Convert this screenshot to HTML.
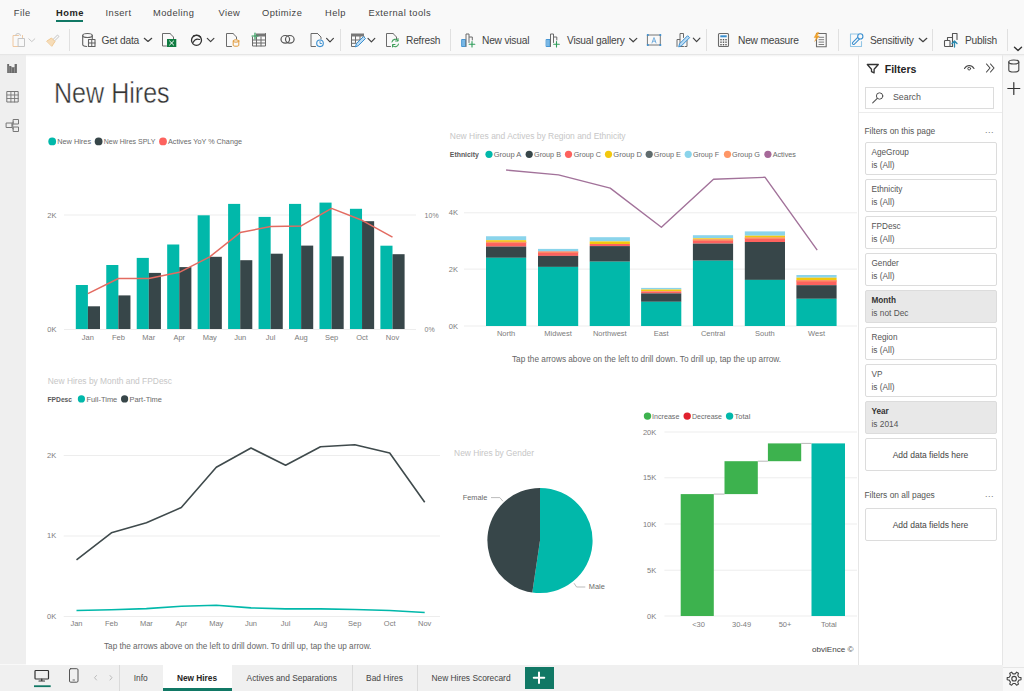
<!DOCTYPE html>
<html><head><meta charset="utf-8">
<style>
*{margin:0;padding:0;box-sizing:border-box}
html,body{width:1024px;height:691px;overflow:hidden;background:#f9f9f9;font-family:"Liberation Sans",sans-serif;color:#323130}
.a{position:absolute}
.t{position:absolute;white-space:nowrap;line-height:1}
#menu .t{font-size:9.3px;letter-spacing:0.45px;color:#444;top:8.8px}
#rib .t{font-size:10.2px;letter-spacing:-0.2px;color:#444;top:36.3px}
.sep{position:absolute;width:1px;background:#e0e0e0;top:29px;height:22px}
#rail{left:0;top:55px;width:26px;height:609px;background:#efefef}
#canvas{left:26px;top:55px;width:832px;height:610px;background:#fff}
#filt{left:858px;top:55px;width:145px;height:610px;background:#fff;border-left:1px solid #e6e6e6;border-right:1px solid #e6e6e6}
#rrail{left:1003px;top:55px;width:21px;height:636px;background:#f8f8f8}
#bot{left:0;top:665px;width:1003px;height:26px;background:#f0f0f0}
.card{position:absolute;left:864.5px;width:132px;height:33px;background:#fff;border:1px solid #dcdcdc;border-radius:2px}
.card .n{position:absolute;left:6px;top:6.6px;font-size:8.2px;color:#555;line-height:1}
.card .v{position:absolute;left:6px;top:18.8px;font-size:8.3px;color:#555;line-height:1}
.card.sel{background:#e8e8e8}
.card.sel .n{font-weight:bold;color:#333}
.card .ad{position:absolute;left:0;width:100%;text-align:center;top:12.5px;font-size:8.5px;color:#444;line-height:1}
.tb{position:absolute;top:665px;height:26px;font-size:8.4px;color:#444;line-height:27.4px;text-align:center}
.bsep{position:absolute;top:665px;width:1px;height:26px;background:#dadada}
svg text{font-family:"Liberation Sans",sans-serif}
</style></head><body>

<div id="rail" class="a"></div>
<div id="canvas" class="a"></div>
<div id="filt" class="a"></div>
<div id="rrail" class="a"></div>
<div id="bot" class="a"></div>
<div class="a" style="left:0;top:54px;width:1024px;height:3px;background:linear-gradient(#e0e0e0,rgba(235,235,235,0.5) 50%,rgba(255,255,255,0))"></div>

<!-- menu -->
<div id="menu">
<div class="t" style="left:13.8px">File</div>
<div class="t" style="left:56px;font-weight:bold;color:#252423;font-size:9.3px;letter-spacing:0.5px;top:8.8px">Home</div>
<div class="a" style="left:56px;top:20px;width:27px;height:2px;background:#117865"></div>
<div class="t" style="left:105.5px">Insert</div>
<div class="t" style="left:153px">Modeling</div>
<div class="t" style="left:218.5px">View</div>
<div class="t" style="left:262px">Optimize</div>
<div class="t" style="left:325px">Help</div>
<div class="t" style="left:368.5px">External tools</div>
</div>

<!-- ribbon -->
<div id="rib">
<div class="t" style="left:101.5px">Get data</div>
<div class="t" style="left:406px">Refresh</div>
<div class="t" style="left:482px">New visual</div>
<div class="t" style="left:567px">Visual gallery</div>
<div class="t" style="left:738px">New measure</div>
<div class="t" style="left:870px">Sensitivity</div>
<div class="t" style="left:965px">Publish</div>
<div class="sep" style="left:69px"></div>
<div class="sep" style="left:340px"></div>
<div class="sep" style="left:450px"></div>
<div class="sep" style="left:705.5px"></div>
<div class="sep" style="left:837.8px"></div>
<div class="sep" style="left:931.5px"></div>
<div class="sep" style="left:1007px"></div>
</div>

<div class="t" style="left:53.6px;top:78px;font-size:29.5px;color:#333;-webkit-text-stroke:0.4px #fff;transform-origin:0 0;transform:scaleX(0.85)">New Hires</div>


<!-- filters pane -->
<div class="t" style="left:884.7px;top:64px;font-size:10.6px;font-weight:bold;color:#252423">Filters</div>
<div class="a" style="left:864.5px;top:87px;width:129px;height:21.5px;border:1px solid #dcdcdc;background:#fff"></div>
<div class="t" style="left:893px;top:93px;font-size:8.8px;color:#555">Search</div>
<div class="a" style="left:859px;top:111.5px;width:143px;height:1px;background:#ececec"></div>
<div class="t" style="left:864.5px;top:127px;font-size:8.4px;color:#555">Filters on this page</div>
<div class="t" style="left:985px;top:126px;font-size:9px;color:#777;letter-spacing:0.5px">...</div>

<div class="card" style="top:141.5px"><div class="n">AgeGroup</div><div class="v">is (All)</div></div>
<div class="card" style="top:178.5px"><div class="n">Ethnicity</div><div class="v">is (All)</div></div>
<div class="card" style="top:215.5px"><div class="n">FPDesc</div><div class="v">is (All)</div></div>
<div class="card" style="top:252.5px"><div class="n">Gender</div><div class="v">is (All)</div></div>
<div class="card sel" style="top:289.5px"><div class="n">Month</div><div class="v">is not Dec</div></div>
<div class="card" style="top:326.5px"><div class="n">Region</div><div class="v">is (All)</div></div>
<div class="card" style="top:363.5px"><div class="n">VP</div><div class="v">is (All)</div></div>
<div class="card sel" style="top:400.5px"><div class="n">Year</div><div class="v">is 2014</div></div>
<div class="card" style="top:437.5px"><div class="ad">Add data fields here</div></div>
<div class="t" style="left:864.5px;top:491px;font-size:8.4px;color:#555">Filters on all pages</div>
<div class="t" style="left:985px;top:490px;font-size:9px;color:#777;letter-spacing:0.5px">...</div>
<div class="card" style="top:507.5px"><div class="ad">Add data fields here</div></div>

<!-- bottom tabs -->
<div class="bsep" style="left:118.5px"></div>
<div class="tb" style="left:119px;width:43.5px">Info</div>
<div class="a" style="left:162.5px;top:665px;width:69px;height:26px;background:#fff"></div>
<div class="tb" style="left:162.5px;width:69px;font-weight:bold;color:#252423;font-size:8.3px">New Hires</div>
<div class="a" style="left:162.5px;top:688px;width:69px;height:3px;background:#117865"></div>
<div class="tb" style="left:232px;width:119.5px">Actives and Separations</div>
<div class="bsep" style="left:351.5px"></div>
<div class="tb" style="left:352px;width:65px">Bad Hires</div>
<div class="bsep" style="left:417px"></div>
<div class="tb" style="left:417.5px;width:107px">New Hires Scorecard</div>
<div class="a" style="left:525px;top:666.5px;width:28.5px;height:22.5px;background:#117865"></div>

<svg class="a" style="left:0;top:0" width="1024" height="691" viewBox="0 0 1024 691">
<line x1="64" y1="215" x2="416" y2="215" stroke="#ededed" stroke-width="1"/>
<line x1="64" y1="329.5" x2="416" y2="329.5" stroke="#ededed" stroke-width="1"/>
<rect x="75.80" y="285" width="12.1" height="44.00" fill="#01b8aa"/>
<rect x="87.90" y="306.3" width="12.1" height="22.70" fill="#374649"/>
<text x="87.90" y="339.50" font-size="7.5" fill="#7d7d7d" text-anchor="middle" font-weight="normal" >Jan</text>
<rect x="106.26" y="265" width="12.1" height="64.00" fill="#01b8aa"/>
<rect x="118.36" y="295.4" width="12.1" height="33.60" fill="#374649"/>
<text x="118.36" y="339.50" font-size="7.5" fill="#7d7d7d" text-anchor="middle" font-weight="normal" >Feb</text>
<rect x="136.72" y="257.9" width="12.1" height="71.10" fill="#01b8aa"/>
<rect x="148.82" y="272.9" width="12.1" height="56.10" fill="#374649"/>
<text x="148.82" y="339.50" font-size="7.5" fill="#7d7d7d" text-anchor="middle" font-weight="normal" >Mar</text>
<rect x="167.18" y="244.5" width="12.1" height="84.50" fill="#01b8aa"/>
<rect x="179.28" y="267.1" width="12.1" height="61.90" fill="#374649"/>
<text x="179.28" y="339.50" font-size="7.5" fill="#7d7d7d" text-anchor="middle" font-weight="normal" >Apr</text>
<rect x="197.64" y="215.3" width="12.1" height="113.70" fill="#01b8aa"/>
<rect x="209.74" y="256.8" width="12.1" height="72.20" fill="#374649"/>
<text x="209.74" y="339.50" font-size="7.5" fill="#7d7d7d" text-anchor="middle" font-weight="normal" >May</text>
<rect x="228.10" y="203.9" width="12.1" height="125.10" fill="#01b8aa"/>
<rect x="240.20" y="260.2" width="12.1" height="68.80" fill="#374649"/>
<text x="240.20" y="339.50" font-size="7.5" fill="#7d7d7d" text-anchor="middle" font-weight="normal" >Jun</text>
<rect x="258.56" y="216.9" width="12.1" height="112.10" fill="#01b8aa"/>
<rect x="270.66" y="253.7" width="12.1" height="75.30" fill="#374649"/>
<text x="270.66" y="339.50" font-size="7.5" fill="#7d7d7d" text-anchor="middle" font-weight="normal" >Jul</text>
<rect x="289.02" y="203.9" width="12.1" height="125.10" fill="#01b8aa"/>
<rect x="301.12" y="245.6" width="12.1" height="83.40" fill="#374649"/>
<text x="301.12" y="339.50" font-size="7.5" fill="#7d7d7d" text-anchor="middle" font-weight="normal" >Aug</text>
<rect x="319.48" y="202.6" width="12.1" height="126.40" fill="#01b8aa"/>
<rect x="331.58" y="256.3" width="12.1" height="72.70" fill="#374649"/>
<text x="331.58" y="339.50" font-size="7.5" fill="#7d7d7d" text-anchor="middle" font-weight="normal" >Sep</text>
<rect x="349.94" y="208.8" width="12.1" height="120.20" fill="#01b8aa"/>
<rect x="362.04" y="221.2" width="12.1" height="107.80" fill="#374649"/>
<text x="362.04" y="339.50" font-size="7.5" fill="#7d7d7d" text-anchor="middle" font-weight="normal" >Oct</text>
<rect x="380.40" y="245.7" width="12.1" height="83.30" fill="#01b8aa"/>
<rect x="392.50" y="254.2" width="12.1" height="74.80" fill="#374649"/>
<text x="392.50" y="339.50" font-size="7.5" fill="#7d7d7d" text-anchor="middle" font-weight="normal" >Nov</text>
<polyline points="87.90,293.7 118.36,278.5 148.82,278.5 179.28,272.3 209.74,256.8 240.20,232.6 270.66,226.5 301.12,225.9 331.58,208.4 362.04,220.3 392.50,237.1" fill="none" stroke="#e36b61" stroke-width="1.5" stroke-linejoin="round"/>
<text x="56.50" y="217.60" font-size="7.5" fill="#7d7d7d" text-anchor="end" font-weight="normal" >2K</text>
<text x="56.50" y="332.10" font-size="7.5" fill="#7d7d7d" text-anchor="end" font-weight="normal" >0K</text>
<text x="424.60" y="217.60" font-size="7" fill="#7d7d7d" text-anchor="start" font-weight="normal" >10%</text>
<text x="424.60" y="332.10" font-size="7" fill="#7d7d7d" text-anchor="start" font-weight="normal" >0%</text>
<circle cx="52.2" cy="141.4" r="3.9" fill="#01b8aa"/>
<text x="57.20" y="144.00" font-size="7.3" fill="#6a6a6a" font-weight="normal" textLength="33.90" lengthAdjust="spacingAndGlyphs">New Hires</text>
<circle cx="98.6" cy="141.4" r="3.9" fill="#374649"/>
<text x="103.80" y="144.00" font-size="7.3" fill="#6a6a6a" font-weight="normal" textLength="51.60" lengthAdjust="spacingAndGlyphs">New Hires SPLY</text>
<circle cx="163" cy="141.4" r="3.9" fill="#fd625e"/>
<text x="168.00" y="144.00" font-size="7.3" fill="#6a6a6a" font-weight="normal" textLength="74.00" lengthAdjust="spacingAndGlyphs">Actives YoY % Change</text>
<text x="449.80" y="138.60" font-size="8.4" fill="#c6c6c6" font-weight="normal" textLength="175.80" lengthAdjust="spacingAndGlyphs">New Hires and Actives by Region and Ethnicity</text>
<text x="449.80" y="156.80" font-size="6.9" fill="#5a5a5a" text-anchor="start" font-weight="bold" >Ethnicity</text>
<circle cx="489" cy="154.3" r="3.6" fill="#01b8aa"/>
<text x="493.70" y="156.90" font-size="7.3" fill="#6a6a6a" font-weight="normal" textLength="27.70" lengthAdjust="spacingAndGlyphs">Group A</text>
<circle cx="529.2" cy="154.3" r="3.6" fill="#374649"/>
<text x="534.00" y="156.90" font-size="7.3" fill="#6a6a6a" font-weight="normal" textLength="27.00" lengthAdjust="spacingAndGlyphs">Group B</text>
<circle cx="568.5" cy="154.3" r="3.6" fill="#fd625e"/>
<text x="573.70" y="156.90" font-size="7.3" fill="#6a6a6a" font-weight="normal" textLength="27.30" lengthAdjust="spacingAndGlyphs">Group C</text>
<circle cx="608.5" cy="154.3" r="3.6" fill="#f2c80f"/>
<text x="613.30" y="156.90" font-size="7.3" fill="#6a6a6a" font-weight="normal" textLength="28.70" lengthAdjust="spacingAndGlyphs">Group D</text>
<circle cx="649.2" cy="154.3" r="3.6" fill="#5f6b6d"/>
<text x="653.70" y="156.90" font-size="7.3" fill="#6a6a6a" font-weight="normal" textLength="27.30" lengthAdjust="spacingAndGlyphs">Group E</text>
<circle cx="688.2" cy="154.3" r="3.6" fill="#8ad4eb"/>
<text x="693.00" y="156.90" font-size="7.3" fill="#6a6a6a" font-weight="normal" textLength="26.00" lengthAdjust="spacingAndGlyphs">Group F</text>
<circle cx="727.5" cy="154.3" r="3.6" fill="#fe9666"/>
<text x="732.00" y="156.90" font-size="7.3" fill="#6a6a6a" font-weight="normal" textLength="28.00" lengthAdjust="spacingAndGlyphs">Group G</text>
<circle cx="767.9" cy="154.3" r="3.6" fill="#a66999"/>
<text x="772.70" y="156.90" font-size="7.3" fill="#6a6a6a" font-weight="normal" textLength="23.20" lengthAdjust="spacingAndGlyphs">Actives</text>
<line x1="464" y1="212.8" x2="857" y2="212.8" stroke="#ededed" stroke-width="1"/>
<line x1="464" y1="269.1" x2="857" y2="269.1" stroke="#ededed" stroke-width="1"/>
<line x1="464" y1="326" x2="857" y2="326" stroke="#ededed" stroke-width="1"/>
<text x="458.00" y="215.40" font-size="7.5" fill="#7d7d7d" text-anchor="end" font-weight="normal" >4K</text>
<text x="458.00" y="271.70" font-size="7.5" fill="#7d7d7d" text-anchor="end" font-weight="normal" >2K</text>
<text x="458.00" y="328.60" font-size="7.5" fill="#7d7d7d" text-anchor="end" font-weight="normal" >0K</text>
<rect x="486" y="236.25" width="40.2" height="3.95" fill="#8ad4eb"/>
<rect x="486" y="240.2" width="40.2" height="1.70" fill="#f2c80f"/>
<rect x="486" y="241.9" width="40.2" height="4.70" fill="#fd625e"/>
<rect x="486" y="246.6" width="40.2" height="11.20" fill="#374649"/>
<rect x="486" y="257.8" width="40.2" height="68.20" fill="#01b8aa"/>
<rect x="486" y="241.9" width="40.2" height="1.2" fill="#fe9666"/>
<text x="506.10" y="336.00" font-size="7.5" fill="#7d7d7d" text-anchor="middle" font-weight="normal" >North</text>
<rect x="538" y="248.9" width="40.2" height="2.70" fill="#8ad4eb"/>
<rect x="538" y="251.6" width="40.2" height="4.30" fill="#fd625e"/>
<rect x="538" y="255.9" width="40.2" height="11.00" fill="#374649"/>
<rect x="538" y="266.9" width="40.2" height="59.10" fill="#01b8aa"/>
<rect x="538" y="251.6" width="40.2" height="1.2" fill="#fe9666"/>
<text x="558.10" y="336.00" font-size="7.5" fill="#7d7d7d" text-anchor="middle" font-weight="normal" >Midwest</text>
<rect x="589.7" y="237.2" width="40.2" height="4.20" fill="#8ad4eb"/>
<rect x="589.7" y="241.4" width="40.2" height="2.60" fill="#f2c80f"/>
<rect x="589.7" y="244" width="40.2" height="2.10" fill="#fd625e"/>
<rect x="589.7" y="246.1" width="40.2" height="15.60" fill="#374649"/>
<rect x="589.7" y="261.7" width="40.2" height="64.30" fill="#01b8aa"/>
<text x="609.80" y="336.00" font-size="7.5" fill="#7d7d7d" text-anchor="middle" font-weight="normal" >Northwest</text>
<rect x="641.1" y="287.9" width="40.2" height="1.60" fill="#8ad4eb"/>
<rect x="641.1" y="289.5" width="40.2" height="1.90" fill="#f2c80f"/>
<rect x="641.1" y="291.4" width="40.2" height="2.00" fill="#fd625e"/>
<rect x="641.1" y="293.4" width="40.2" height="8.40" fill="#374649"/>
<rect x="641.1" y="301.8" width="40.2" height="24.20" fill="#01b8aa"/>
<text x="661.20" y="336.00" font-size="7.5" fill="#7d7d7d" text-anchor="middle" font-weight="normal" >East</text>
<rect x="692.9" y="235.2" width="40.2" height="3.10" fill="#8ad4eb"/>
<rect x="692.9" y="238.3" width="40.2" height="1.30" fill="#f2c80f"/>
<rect x="692.9" y="239.6" width="40.2" height="4.00" fill="#fd625e"/>
<rect x="692.9" y="243.6" width="40.2" height="17.10" fill="#374649"/>
<rect x="692.9" y="260.7" width="40.2" height="65.30" fill="#01b8aa"/>
<rect x="692.9" y="239.6" width="40.2" height="1.2" fill="#fe9666"/>
<text x="713.00" y="336.00" font-size="7.5" fill="#7d7d7d" text-anchor="middle" font-weight="normal" >Central</text>
<rect x="744.8" y="231.4" width="40.2" height="4.30" fill="#8ad4eb"/>
<rect x="744.8" y="235.7" width="40.2" height="2.00" fill="#f2c80f"/>
<rect x="744.8" y="237.7" width="40.2" height="4.30" fill="#fd625e"/>
<rect x="744.8" y="242" width="40.2" height="37.90" fill="#374649"/>
<rect x="744.8" y="279.9" width="40.2" height="46.10" fill="#01b8aa"/>
<rect x="744.8" y="237.7" width="40.2" height="1.2" fill="#fe9666"/>
<text x="764.90" y="336.00" font-size="7.5" fill="#7d7d7d" text-anchor="middle" font-weight="normal" >South</text>
<rect x="796.4" y="275" width="40.2" height="2.70" fill="#8ad4eb"/>
<rect x="796.4" y="277.7" width="40.2" height="2.60" fill="#f2c80f"/>
<rect x="796.4" y="280.3" width="40.2" height="4.90" fill="#fd625e"/>
<rect x="796.4" y="285.2" width="40.2" height="13.60" fill="#374649"/>
<rect x="796.4" y="298.8" width="40.2" height="27.20" fill="#01b8aa"/>
<rect x="796.4" y="280.3" width="40.2" height="1.2" fill="#fe9666"/>
<text x="816.50" y="336.00" font-size="7.5" fill="#7d7d7d" text-anchor="middle" font-weight="normal" >West</text>
<polyline points="506.1,170 558.5,174.9 610.2,188.1 661.4,227.3 713.5,179.3 765.1,177.3 817.2,250.1" fill="none" stroke="#a2729a" stroke-width="1.4" stroke-linejoin="round"/>
<text x="512.00" y="361.80" font-size="8.2" fill="#666" font-weight="normal" textLength="269.00" lengthAdjust="spacingAndGlyphs">Tap the arrows above on the left to drill down. To drill up, tap the up arrow.</text>
<text x="47.80" y="383.50" font-size="8.4" fill="#c6c6c6" font-weight="normal" textLength="124.20" lengthAdjust="spacingAndGlyphs">New Hires by Month and FPDesc</text>
<text x="47.50" y="401.50" font-size="6.7" fill="#5a5a5a" text-anchor="start" font-weight="bold" >FPDesc</text>
<circle cx="81.4" cy="398.9" r="3.6" fill="#01b8aa"/>
<text x="86.40" y="401.50" font-size="7.3" fill="#6a6a6a" font-weight="normal" textLength="30.90" lengthAdjust="spacingAndGlyphs">Full-Time</text>
<circle cx="124.6" cy="398.9" r="3.6" fill="#374649"/>
<text x="129.50" y="401.50" font-size="7.3" fill="#6a6a6a" font-weight="normal" textLength="32.40" lengthAdjust="spacingAndGlyphs">Part-Time</text>
<line x1="63.7" y1="455.5" x2="440" y2="455.5" stroke="#ededed" stroke-width="1"/>
<text x="56.20" y="457.60" font-size="7.5" fill="#7d7d7d" text-anchor="end" font-weight="normal" >2K</text>
<line x1="63.7" y1="536" x2="440" y2="536" stroke="#ededed" stroke-width="1"/>
<text x="56.20" y="538.10" font-size="7.5" fill="#7d7d7d" text-anchor="end" font-weight="normal" >1K</text>
<line x1="63.7" y1="616.5" x2="440" y2="616.5" stroke="#ededed" stroke-width="1"/>
<text x="56.20" y="618.60" font-size="7.5" fill="#7d7d7d" text-anchor="end" font-weight="normal" >0K</text>
<polyline points="76.5,559.9000000000001 111.4,532.8000000000001 146.4,522.8000000000001 181.3,507.59999999999997 216.3,467.2 251,448.0 285.6,465.3 320.5,446.7 354.8,444.7 389.7,453.0 424.7,502.3" fill="none" stroke="#3f4a4c" stroke-width="1.6" stroke-linejoin="round"/>
<polyline points="76.5,610.5 111.4,609.8 146.4,608.6 181.3,606.2 216.3,605.3 251,607.9 285.6,608.9 320.5,608.9 354.8,609.5 389.7,610.5 424.7,612.5" fill="none" stroke="#01b8aa" stroke-width="1.6" stroke-linejoin="round"/>
<text x="76.50" y="626.30" font-size="7.5" fill="#7d7d7d" text-anchor="middle" font-weight="normal" >Jan</text>
<text x="111.40" y="626.30" font-size="7.5" fill="#7d7d7d" text-anchor="middle" font-weight="normal" >Feb</text>
<text x="146.40" y="626.30" font-size="7.5" fill="#7d7d7d" text-anchor="middle" font-weight="normal" >Mar</text>
<text x="181.30" y="626.30" font-size="7.5" fill="#7d7d7d" text-anchor="middle" font-weight="normal" >Apr</text>
<text x="216.30" y="626.30" font-size="7.5" fill="#7d7d7d" text-anchor="middle" font-weight="normal" >May</text>
<text x="251.00" y="626.30" font-size="7.5" fill="#7d7d7d" text-anchor="middle" font-weight="normal" >Jun</text>
<text x="285.60" y="626.30" font-size="7.5" fill="#7d7d7d" text-anchor="middle" font-weight="normal" >Jul</text>
<text x="320.50" y="626.30" font-size="7.5" fill="#7d7d7d" text-anchor="middle" font-weight="normal" >Aug</text>
<text x="354.80" y="626.30" font-size="7.5" fill="#7d7d7d" text-anchor="middle" font-weight="normal" >Sep</text>
<text x="389.70" y="626.30" font-size="7.5" fill="#7d7d7d" text-anchor="middle" font-weight="normal" >Oct</text>
<text x="424.70" y="626.30" font-size="7.5" fill="#7d7d7d" text-anchor="middle" font-weight="normal" >Nov</text>
<text x="104.00" y="648.50" font-size="8.2" fill="#666" font-weight="normal" textLength="267.40" lengthAdjust="spacingAndGlyphs">Tap the arrows above on the left to drill down. To drill up, tap the up arrow.</text>
<text x="454.10" y="456.30" font-size="8.4" fill="#c6c6c6" font-weight="normal" textLength="79.90" lengthAdjust="spacingAndGlyphs">New Hires by Gender</text>
<path d="M540,540.5 L540,487.9 A52.6,52.6 0 1,1 532.32,592.54 Z" fill="#01b8aa"/>
<path d="M540,540.5 L532.32,592.54 A52.6,52.6 0 0,1 540,487.9 Z" fill="#374649"/>
<text x="462.70" y="500.40" font-size="7.5" fill="#6a6a6a" font-weight="normal" textLength="24.60" lengthAdjust="spacingAndGlyphs">Female</text>
<polyline points="491,497.6 499.8,497.6 503,501.3" fill="none" stroke="#aaa" stroke-width="0.8"/>
<text x="588.80" y="589.40" font-size="7.5" fill="#6a6a6a" font-weight="normal" textLength="16.00" lengthAdjust="spacingAndGlyphs">Male</text>
<polyline points="574,583.2 576.6,587 585.3,587" fill="none" stroke="#aaa" stroke-width="0.8"/>
<circle cx="647.5" cy="416.1" r="3.7" fill="#3db24e"/>
<text x="652.10" y="418.70" font-size="7.3" fill="#6a6a6a" font-weight="normal" textLength="27.30" lengthAdjust="spacingAndGlyphs">Increase</text>
<circle cx="687.2" cy="416.1" r="3.7" fill="#e0212e"/>
<text x="691.90" y="418.70" font-size="7.3" fill="#6a6a6a" font-weight="normal" textLength="30.10" lengthAdjust="spacingAndGlyphs">Decrease</text>
<circle cx="729.6" cy="416.1" r="3.7" fill="#01b8aa"/>
<text x="734.60" y="418.70" font-size="7.3" fill="#6a6a6a" font-weight="normal" textLength="15.70" lengthAdjust="spacingAndGlyphs">Total</text>
<line x1="664.4" y1="432" x2="857" y2="432" stroke="#ededed" stroke-width="1"/>
<text x="656.30" y="434.60" font-size="7.5" fill="#7d7d7d" text-anchor="end" font-weight="normal" >20K</text>
<line x1="664.4" y1="477.8" x2="857" y2="477.8" stroke="#ededed" stroke-width="1"/>
<text x="656.30" y="480.40" font-size="7.5" fill="#7d7d7d" text-anchor="end" font-weight="normal" >15K</text>
<line x1="664.4" y1="524" x2="857" y2="524" stroke="#ededed" stroke-width="1"/>
<text x="656.30" y="526.60" font-size="7.5" fill="#7d7d7d" text-anchor="end" font-weight="normal" >10K</text>
<line x1="664.4" y1="570.2" x2="857" y2="570.2" stroke="#ededed" stroke-width="1"/>
<text x="656.30" y="572.80" font-size="7.5" fill="#7d7d7d" text-anchor="end" font-weight="normal" >5K</text>
<line x1="664.4" y1="616" x2="857" y2="616" stroke="#ededed" stroke-width="1"/>
<text x="656.30" y="618.60" font-size="7.5" fill="#7d7d7d" text-anchor="end" font-weight="normal" >0K</text>
<rect x="680.7" y="494.1" width="33.1" height="121.9" fill="#3db24e"/>
<rect x="724.5" y="461.2" width="33.3" height="32.9" fill="#3db24e"/>
<rect x="767.9" y="443.4" width="33.3" height="17.8" fill="#3db24e"/>
<rect x="811.5" y="443.4" width="33.5" height="172.6" fill="#01b8aa"/>
<line x1="713.8" y1="494.1" x2="724.5" y2="494.1" stroke="#999" stroke-width="0.7"/>
<line x1="757.8" y1="461.2" x2="767.9" y2="461.2" stroke="#999" stroke-width="0.7"/>
<line x1="801.2" y1="443.4" x2="811.5" y2="443.4" stroke="#999" stroke-width="0.7"/>
<text x="698.50" y="626.70" font-size="7.5" fill="#7d7d7d" text-anchor="middle" font-weight="normal" >&lt;30</text>
<text x="741.60" y="626.70" font-size="7.5" fill="#7d7d7d" text-anchor="middle" font-weight="normal" >30-49</text>
<text x="785.00" y="626.70" font-size="7.5" fill="#7d7d7d" text-anchor="middle" font-weight="normal" >50+</text>
<text x="828.80" y="626.70" font-size="7.5" fill="#7d7d7d" text-anchor="middle" font-weight="normal" >Total</text>
<text x="812.00" y="651.60" font-size="8.1" fill="#444" font-weight="normal" textLength="41.50" lengthAdjust="spacingAndGlyphs">obviEnce ©</text>
</svg>

<!--ICONSTART--><svg class="a" style="left:0;top:0" width="1024" height="691" viewBox="0 0 1024 691" fill="none" stroke-linecap="round" stroke-linejoin="round">
<!-- paste (disabled) -->
<path d="M18.5,35.5 h-5.5 v11 h5" stroke="#f0c8a0" stroke-width="1"/>
<path d="M15.5,35.5 a2.5,2 0 0 1 5,0" stroke="#c8c8c8" stroke-width="1"/>
<rect x="18.5" y="38.5" width="6" height="8" stroke="#c4c4c4" stroke-width="1"/>
<path d="M22.5,35.5 v2" stroke="#f0c8a0" stroke-width="1"/>
<polyline points="28.8,38.8 31.8,41.6 34.8,38.8" stroke="#c8c8c8" stroke-width="1"/>
<!-- format painter -->
<path d="M52.5,40 l5,-5 l1.5,1.5 l-5,5 z" stroke="#c4c4c4" stroke-width="1"/>
<path d="M47,41 l4.5,-3 l3.5,3.5 l-3,4.5 z" fill="#f6dcb8" stroke="#f0c890" stroke-width="1"/>
<!-- get data -->
<ellipse cx="87.5" cy="35.5" rx="4.8" ry="2" stroke="#616161" stroke-width="1.1"/>
<path d="M82.7,35.5 v9 c0,1 1.5,1.8 4,2" stroke="#616161" stroke-width="1.1"/>
<path d="M92.3,35.5 v3" stroke="#616161" stroke-width="1.1"/>
<rect x="88.5" y="39.5" width="6.5" height="7" stroke="#616161" stroke-width="1.1"/>
<path d="M88.5,43 h6.5 M91.75,39.5 v7" stroke="#616161" stroke-width="1"/>
<polyline points="144.3,38.3 148,41.5 151.7,38.3" stroke="#424242" stroke-width="1.2"/>
<!-- excel -->
<path d="M170,33.5 h-7.5 v12.5 h4 M170,33.5 l3.5,3.5 v2" stroke="#6b6b6b" stroke-width="1"/>
<rect x="167" y="39" width="9.3" height="8" fill="#107c41"/>
<path d="M169.6,41 l4,4 M173.6,41 l-4,4" stroke="#fff" stroke-width="1"/>
<!-- dataverse -->
<circle cx="196.5" cy="40.3" r="5" stroke="#333" stroke-width="1.3"/>
<path d="M193,42.5 c1.5,-3 4,-4 6.5,-3" stroke="#333" stroke-width="1.2"/>
<path d="M193.5,36 c2,-1 5,-1.5 7,1" stroke="#333" stroke-width="1.4"/>
<polyline points="207.3,38.3 210.6,41.6 213.9,38.3" stroke="#424242" stroke-width="1.2"/>
<!-- doc db -->
<path d="M233,33.5 h-6.5 v13 h5 M233,33.5 l3.5,3.5 v2" stroke="#6b6b6b" stroke-width="1"/>
<ellipse cx="236" cy="41" rx="2.8" ry="1.2" stroke="#e39c3c" stroke-width="1"/>
<path d="M233.2,41 v4.5 c0,1 5.6,1 5.6,0 v-4.5" stroke="#e39c3c" stroke-width="1"/>
<!-- enter data grid -->
<rect x="256" y="33.5" width="9.5" height="3" fill="#777"/>
<path d="M252.5,37 v9 h13 v-12.5 M252.5,40 h13 M252.5,43 h13 M256.5,37 v9 M261,37 v9" stroke="#6b6b6b" stroke-width="1"/>
<path d="M255,33 v6 M252,36 h6" stroke="#2e9c5a" stroke-width="1.2"/>
<!-- @@ -->
<ellipse cx="285.3" cy="39.3" rx="4.3" ry="3.8" stroke="#555" stroke-width="1.2"/>
<ellipse cx="289.8" cy="39.3" rx="4.3" ry="3.8" stroke="#555" stroke-width="1.2"/>
<!-- doc clock -->
<path d="M317.5,33.5 h-6.5 v13 h4.5 M317.5,33.5 l3.5,3.5 v2" stroke="#6b6b6b" stroke-width="1"/>
<circle cx="320" cy="43.3" r="3.3" stroke="#3a8fd0" stroke-width="1.1"/>
<path d="M320,41.5 v2 h1.5" stroke="#3a8fd0" stroke-width="0.9"/>
<polyline points="326.6,38.4 330,41.8 333.4,38.4" stroke="#424242" stroke-width="1.2"/>
<!-- table pencil -->
<rect x="351" y="33.5" width="13" height="3" fill="#777"/>
<path d="M351.5,36.5 v10 h4 M351.5,40 h8 M351.5,43.3 h5 M355.5,36.5 v6 M360,36.5 v3.5 M364,36.5 v1.5" stroke="#6b6b6b" stroke-width="1"/>
<path d="M355.5,46.5 l1,-3 l7,-7 l2,2 l-7,7 z" fill="#bcdcf4" stroke="#3a8fd0" stroke-width="1"/>
<polyline points="368,38.4 371.4,41.8 374.8,38.4" stroke="#424242" stroke-width="1.2"/>
<!-- refresh -->
<path d="M393,33.5 h-6.5 v13 h4 M393,33.5 l3.5,3.5 v2.5" stroke="#6b6b6b" stroke-width="1"/>
<path d="M392,42 a3.3,3.3 0 0 1 6,-1.2 M398.5,44 a3.3,3.3 0 0 1 -6,1.2" stroke="#3c9e58" stroke-width="1.1"/>
<path d="M398,38.5 v2.5 h-2.5 M392.5,47 v-2.5 h2.5" stroke="#3c9e58" stroke-width="1"/>
<!-- new visual -->
<rect x="462" y="39.5" width="3.6" height="7" fill="#79b8e6" stroke="#3a8fd0" stroke-width="0.9"/>
<path d="M466,46.5 v-12.5 h3 v8.5" stroke="#6b6b6b" stroke-width="1"/>
<path d="M469.5,37 h2.8 v3" stroke="#6b6b6b" stroke-width="1"/>
<path d="M472,41.5 v5.5 M469.2,44.2 h5.6" stroke="#2e9c5a" stroke-width="1.1"/>
<!-- visual gallery -->
<rect x="546.5" y="39.5" width="3.6" height="7" fill="#79b8e6" stroke="#3a8fd0" stroke-width="0.9"/>
<path d="M550.5,46.5 v-12.5 h3 v8.5" stroke="#6b6b6b" stroke-width="1"/>
<path d="M554,37 h2.8 v3" stroke="#6b6b6b" stroke-width="1"/>
<path d="M556.5,41.5 v5.5 M553.7,44.2 h5.6" stroke="#2e9c5a" stroke-width="1.1"/>
<polyline points="629.6,38.4 633.2,41.8 636.8,38.4" stroke="#424242" stroke-width="1.2"/>
<!-- text box -->
<rect x="647.8" y="35" width="12.5" height="10" stroke="#777" stroke-width="1"/>
<circle cx="647.8" cy="35" r="1.1" fill="#3a8fd0"/><circle cx="660.3" cy="35" r="1.1" fill="#3a8fd0"/>
<circle cx="647.8" cy="45" r="1.1" fill="#3a8fd0"/><circle cx="660.3" cy="45" r="1.1" fill="#3a8fd0"/>
<path d="M652,43 l2,-5.5 l2,5.5 M652.8,41.2 h2.6" stroke="#5aa0d8" stroke-width="0.8"/>
<!-- pencil chart -->
<path d="M677,46.5 v-7 h3 v-6 h3.5 v4 M683.5,46.5 h-3.5 v-7" stroke="#6b6b6b" stroke-width="1"/>
<path d="M684,40 h3 v6.5 h-2" stroke="#6b6b6b" stroke-width="1"/>
<path d="M678.8,46.5 l0.8,-2.8 l8,-8 l2,2 l-8,8 z" fill="#bcdcf4" stroke="#3a8fd0" stroke-width="1"/>
<polyline points="693.3,38.2 696.6,41.6 699.9,38.2" stroke="#424242" stroke-width="1.2"/>
<!-- calculator -->
<rect x="718.5" y="33.5" width="10" height="13" rx="1" stroke="#6b6b6b" stroke-width="1.1"/>
<rect x="720.3" y="35.3" width="6.4" height="2" fill="#3a8fd0"/>
<g fill="#555"><rect x="720.3" y="39" width="1.4" height="1.4"/><rect x="722.8" y="39" width="1.4" height="1.4"/><rect x="725.3" y="39" width="1.4" height="1.4"/>
<rect x="720.3" y="41.5" width="1.4" height="1.4"/><rect x="722.8" y="41.5" width="1.4" height="1.4"/><rect x="725.3" y="41.5" width="1.4" height="1.4"/>
<rect x="720.3" y="44" width="1.4" height="1.4"/><rect x="722.8" y="44" width="1.4" height="1.4"/><rect x="725.3" y="44" width="1.4" height="1.4"/></g>
<!-- quick measure -->
<rect x="816.5" y="33.5" width="9.7" height="13.2" stroke="#6b6b6b" stroke-width="1.1"/>
<path d="M818.6,37.3 h5.5 M818.6,39.7 h5.5 M818.6,42.1 h5.5 M818.6,44.5 h5.5" stroke="#6f6f6f" stroke-width="0.9" stroke-linecap="butt"/>
<path d="M816.8,32.8 l-2.6,4.8 h2.4 l-1.9,3.8 l4.6,-5.4 h-2.4 l1.9,-3.2 z" fill="#f2a72a" stroke="#e8962a" stroke-width="0.5"/>
<!-- sensitivity -->
<path d="M858,34 h-7.5 v12.5 h11 v-5" stroke="#93c6e6" stroke-width="1.1"/>
<path d="M853.6,43.2 l6.2,-6.2" stroke="#3a8fd0" stroke-width="3.4"/>
<path d="M853.6,43.2 l6.2,-6.2" stroke="#f9f9f9" stroke-width="1.3"/>
<circle cx="860.3" cy="36.4" r="2.6" stroke="#3a8fd0" stroke-width="1.1" fill="#f9f9f9"/>
<polyline points="919.2,38.3 923,41.7 926.8,38.3" stroke="#424242" stroke-width="1.2"/>
<!-- publish -->
<rect x="944.5" y="40.5" width="5.5" height="6" rx="0.8" stroke="#555" stroke-width="1.1"/>
<path d="M947.5,40.5 v-3 h5 v9 h-2.5" stroke="#555" stroke-width="1.1"/>
<path d="M952.5,37.5 v-4 h4.5 v6" stroke="#555" stroke-width="1.1"/>
<path d="M954.5,47 v-6 M952,43.5 l2.5,-2.5 l2.5,2.5" stroke="#2a8ab0" stroke-width="1.3"/>
<polyline points="1014.5,47.3 1018,50.5 1021.5,47.3" stroke="#333" stroke-width="1.4"/>

<!-- left rail -->
<path d="M7.2,73 V64 H9.1 V65.9 H11.4 V67.2 H14.6 V64.1 H16.9 V73 Z" fill="#6a6a6a"/>
<path d="M9.1,66.5 V72.3 M11.6,67.8 V72.3 M14.5,67.8 V72.3" stroke="#a8a8a8" stroke-width="0.6"/>
<rect x="7.2" y="91.5" width="11" height="10.5" stroke="#777" stroke-width="1"/>
<path d="M7.2,95 h11 M7.2,98.5 h11 M10.9,91.5 v10.5 M14.6,91.5 v10.5" stroke="#777" stroke-width="0.9"/>
<rect x="6.5" y="123" width="5.5" height="4.5" stroke="#777" stroke-width="1"/>
<rect x="13.5" y="119.5" width="5" height="4.5" stroke="#777" stroke-width="1"/>
<rect x="13.5" y="127" width="5" height="4.5" stroke="#777" stroke-width="1"/>
<path d="M12,125 h0.8 v-3 h0.7 M12.8,125 v4 h0.7" stroke="#777" stroke-width="0.9"/>

<!-- filter pane icons -->
<path d="M867.3,64.5 h11 l-4.2,4.8 v3.6 l-2.6,-1.2 v-2.4 z" stroke="#333" stroke-width="1.3"/>
<path d="M964.5,68.5 c2.5,-4 7,-4 9.5,0" stroke="#444" stroke-width="1.1"/>
<circle cx="969.2" cy="68.6" r="1.4" stroke="#444" stroke-width="1"/>
<polyline points="986.5,64 990,68 986.5,72" stroke="#444" stroke-width="1.1"/>
<polyline points="990.5,64 994,68 990.5,72" stroke="#444" stroke-width="1.1"/>
<circle cx="879.6" cy="96" r="3.2" stroke="#555" stroke-width="1"/>
<path d="M877.3,98.3 l-4.6,4.6" stroke="#555" stroke-width="1.1"/>

<!-- right rail -->
<ellipse cx="1013.8" cy="62" rx="5" ry="2" stroke="#444" stroke-width="1.1"/>
<path d="M1008.8,62 v8 c0,2.7 10,2.7 10,0 v-8" stroke="#444" stroke-width="1.1"/>
<path d="M1013.8,82.5 v12 M1007.8,88.5 h12" stroke="#333" stroke-width="1.2"/>
<!-- gear -->
<rect x="1003" y="667" width="21" height="1" fill="#e6e6e6"/>
<circle cx="1014.1" cy="678.7" r="2.3" stroke="#444" stroke-width="1.1"/>
<path d="M1015.22,673.83 L1016.61,672.16 L1018.51,673.26 L1017.76,675.29 L1018.88,677.24 L1021.01,677.60 L1021.01,679.80 L1018.88,680.16 L1017.76,682.11 L1018.51,684.14 L1016.61,685.24 L1015.22,683.57 L1012.98,683.57 L1011.59,685.24 L1009.69,684.14 L1010.44,682.11 L1009.32,680.16 L1007.19,679.80 L1007.19,677.60 L1009.32,677.24 L1010.44,675.29 L1009.69,673.26 L1011.59,672.16 L1012.98,673.83 Z" stroke="#444" stroke-width="1.1"/>

<!-- bottom bar -->
<rect x="35" y="670.5" width="13.5" height="8.5" rx="0.8" stroke="#333" stroke-width="1.2"/>
<path d="M39,681 h5.5 M41.75,679 v2" stroke="#333" stroke-width="1.2"/>
<rect x="34" y="685.3" width="16.7" height="1.8" fill="#117865"/>
<rect x="69.5" y="668.7" width="8.5" height="13.5" rx="1.2" stroke="#555" stroke-width="1"/>
<path d="M73,680 h1.5" stroke="#555" stroke-width="0.9"/>
<polyline points="96.5,675.5 94.5,677.7 96.5,680" stroke="#bbb" stroke-width="1"/>
<polyline points="110,675.5 112,677.7 110,680" stroke="#bbb" stroke-width="1"/>
<path d="M539,672.5 v10.5 M533.75,677.75 h10.5" stroke="#fff" stroke-width="2"/>
</svg>
<!--ICONEND-->
</body></html>
